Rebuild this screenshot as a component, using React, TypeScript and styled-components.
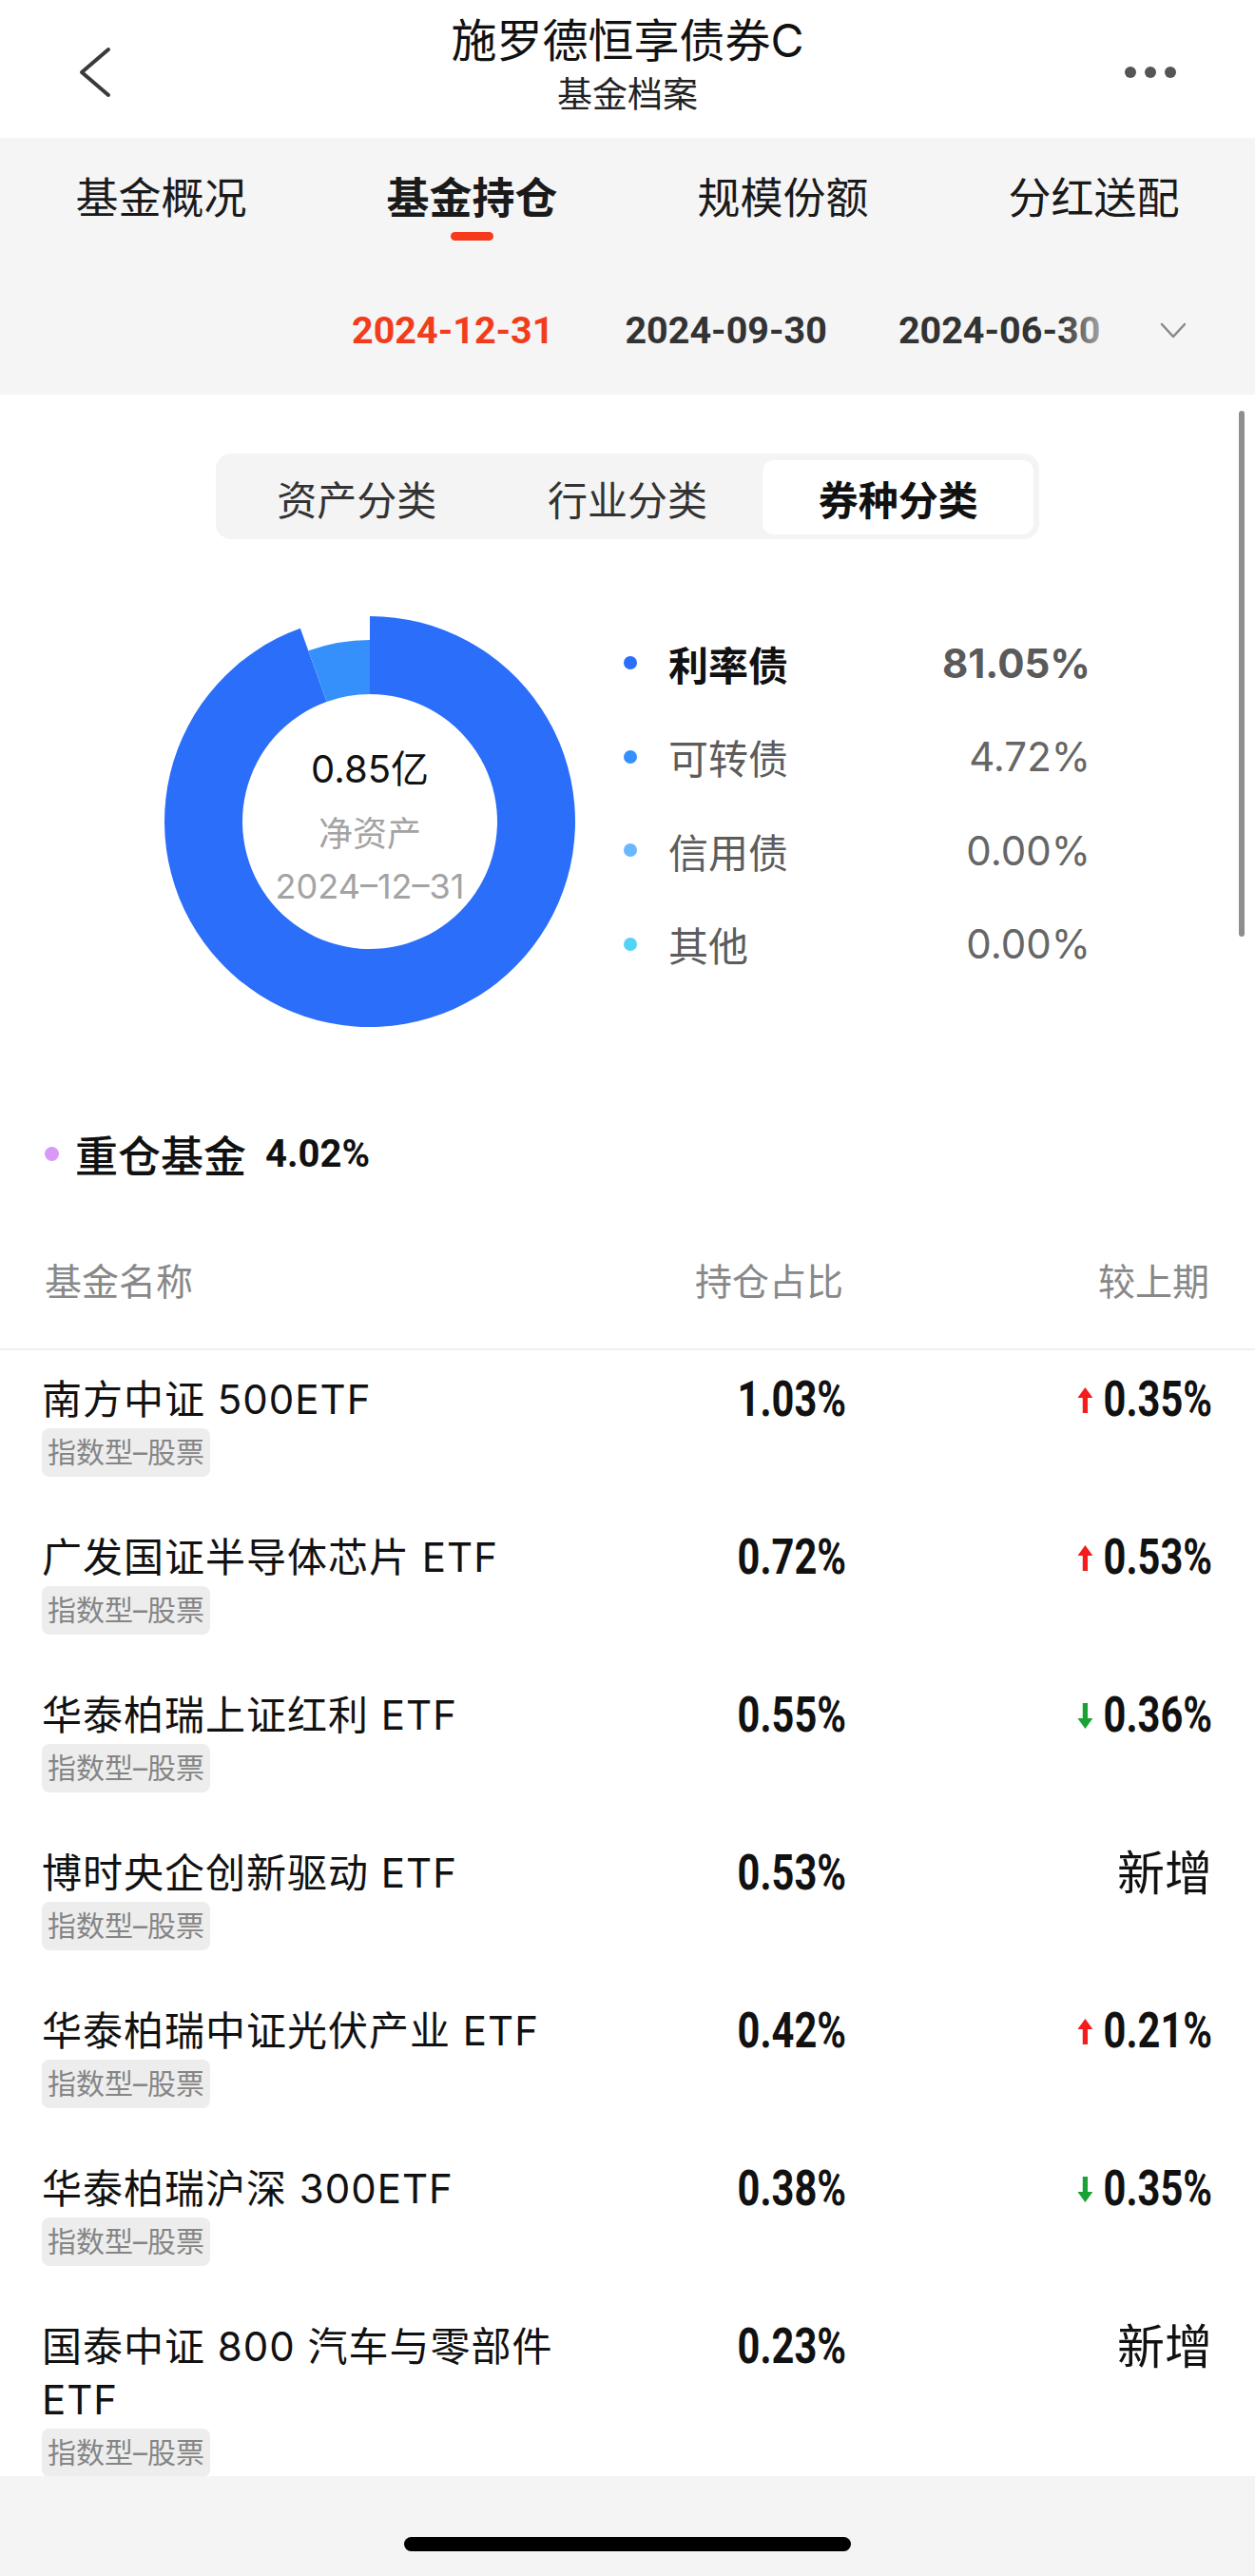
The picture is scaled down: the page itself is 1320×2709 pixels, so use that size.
import React from "react";
import styled, { createGlobalStyle } from "styled-components";

const GlobalStyle = createGlobalStyle`
  html, body { margin: 0; padding: 0; background: #fff; }
  body {
    font-family: Inter, "Noto Sans CJK SC", sans-serif;
    color: #111;
  }
  * { box-sizing: border-box; }
`;

const NUM = `Roboto, "Liberation Sans", sans-serif`;

const Screen = styled.div`
  width: 1320px;
  height: 2709px;
  display: flex;
  flex-direction: column;
  overflow: hidden;
  background: #f5f5f5;
`;

/* ---------- nav bar ---------- */
const NavBar = styled.header`
  flex-shrink: 0;
  height: 145px;
  background: #fff;
  display: grid;
  grid-template-columns: 220px 1fr 220px;
  align-items: start;
`;
const BackButton = styled.div`
  margin: 48px 0 0 80px;
  width: 40px;
  height: 56px;
`;
const TitleBlock = styled.div`
  display: flex;
  flex-direction: column;
  align-items: center;
  padding-top: 13px;
`;
const Title = styled.div`
  font-size: 48px;
  line-height: 60px;
  color: #111;
`;
const SubTitle = styled.div`
  margin-top: 2px;
  font-size: 37px;
  line-height: 50px;
  color: #222;
`;
const MoreButton = styled.div`
  justify-self: end;
  margin: 70px 83px 0 0;
  display: flex;
  gap: 9px;
`;
const Dot = styled.span`
  width: 12px;
  height: 12px;
  border-radius: 50%;
  background: #555;
`;

/* ---------- tabs ---------- */
const TabBar = styled.nav`
  flex-shrink: 0;
  height: 125px;
  display: grid;
  grid-template-columns: repeat(4, 1fr);
  padding: 0 6px;
`;
const Tab = styled.div<{ $active?: boolean }>`
  display: flex;
  flex-direction: column;
  align-items: center;
  padding-top: 34px;
  font-size: 45px;
  line-height: 60px;
  font-weight: ${(p) => (p.$active ? 700 : 400)};
  color: #1a1a1a;
`;
const TabIndicator = styled.span`
  margin-top: 5px;
  width: 45px;
  height: 9px;
  border-radius: 5px;
  background: #f53b1c;
`;

/* ---------- date strip ---------- */
const DateBar = styled.div`
  flex-shrink: 0;
  position: relative;
  height: 145px;
  padding: 10px 0 0 370px;
  display: flex;
  align-items: center;
  gap: 75px;
  overflow: hidden;
  white-space: nowrap;
  &::after {
    content: "";
    position: absolute;
    top: 0;
    bottom: 0;
    right: 0;
    width: 205px;
    background: linear-gradient(to right, rgba(245, 245, 245, 0) 0%, #f5f5f5 36%);
  }
`;
const DateItem = styled.span<{ $active?: boolean }>`
  font-family: ${NUM};
  font-weight: 700;
  font-size: 39.5px;
  color: ${(p) => (p.$active ? "#f23d1c" : "#333")};
`;
const DateToggle = styled.svg`
  position: absolute;
  left: 1220px;
  top: 339px;
  z-index: 1;
`;

/* ---------- main card ---------- */
const Main = styled.main`
  flex: 1;
  position: relative;
  overflow: hidden;
  background: #fff;
`;
const ScrollThumb = styled.div`
  position: absolute;
  right: 11px;
  top: 17px;
  width: 6px;
  height: 553px;
  border-radius: 3px;
  background: #8e8e8e;
`;

const Segmented = styled.div`
  margin: 62px auto 0;
  width: 866px;
  height: 90px;
  padding: 7px 6px 5px;
  background: #f4f4f4;
  border-radius: 16px;
  display: grid;
  grid-template-columns: repeat(3, 1fr);
`;
const Segment = styled.div<{ $active?: boolean }>`
  display: flex;
  align-items: center;
  justify-content: center;
  border-radius: 12px;
  font-size: 42px;
  background: ${(p) => (p.$active ? "#fff" : "transparent")};
  font-weight: ${(p) => (p.$active ? 700 : 400)};
  color: ${(p) => (p.$active ? "#111" : "#333")};
`;

const ChartRow = styled.section`
  margin-top: 81px;
  display: flex;
  align-items: flex-start;
  padding-left: 173px;
  gap: 51px;
`;
const DonutBox = styled.div`
  position: relative;
  width: 432px;
  height: 432px;
  flex-shrink: 0;
`;
const DonutCenter = styled.div`
  position: absolute;
  inset: 0;
  display: flex;
  flex-direction: column;
  align-items: center;
  justify-content: center;
  padding-top: 10px;
`;
const CenterValue = styled.div`
  font-size: 40px;
  line-height: 62px;
  color: #111;
`;
const CenterLabel = styled.div<{ $shift?: number }>`
  margin-top: ${(p) => p.$shift ?? 0}px;
  font-size: 36px;
  line-height: 58px;
  color: #a3a3a3;
`;
const Legend = styled.ul`
  list-style: none;
  margin: 0;
  padding: 0;
  width: 491px;
`;
const LegendRow = styled.li`
  height: 98.5px;
  display: flex;
  align-items: center;
`;
const LegendDot = styled.span<{ $color: string }>`
  width: 14px;
  height: 14px;
  border-radius: 50%;
  background: ${(p) => p.$color};
  margin-right: 33px;
`;
const LegendName = styled.span<{ $active?: boolean }>`
  font-size: 42px;
  font-weight: ${(p) => (p.$active ? 700 : 400)};
  color: ${(p) => (p.$active ? "#111" : "#5c5c5c")};
`;
const LegendValue = styled.span<{ $active?: boolean }>`
  margin-left: auto;
  font-size: 42px;
  font-weight: ${(p) => (p.$active ? 700 : 400)};
  color: ${(p) => (p.$active ? "#5a5a5a" : "#666")};
`;

const HeavyTitle = styled.div`
  margin-top: 102px;
  padding-left: 47px;
  display: flex;
  align-items: center;
  height: 62px;
`;
const HeavyDot = styled.span`
  width: 15px;
  height: 15px;
  border-radius: 50%;
  background: #d89af6;
  margin-right: 17px;
`;
const HeavyText = styled.span`
  font-size: 45px;
  font-weight: 500;
  color: #111;
  margin-right: 20px;
`;
const HeavyValue = styled.span`
  font-family: ${NUM};
  font-weight: 700;
  font-size: 40px;
  color: #111;
`;

const TableHead = styled.div`
  margin-top: 76px;
  display: grid;
  grid-template-columns: 1fr 257px 385px;
  padding: 0 48px 42px 47px;
  border-bottom: 2px solid #efefef;
  font-size: 39px;
  line-height: 56px;
  color: #888;
`;
const HeadCell = styled.div<{ $right?: boolean }>`
  text-align: ${(p) => (p.$right ? "right" : "left")};
`;

const Row = styled.div`
  display: grid;
  grid-template-columns: 1fr 260px 385px;
  align-items: start;
  padding: 24px 45px 33px 44px;
`;
const NameCell = styled.div`
  display: flex;
  flex-direction: column;
  align-items: flex-start;
  padding-right: 10px;
`;
const FundName = styled.div`
  font-size: 42px;
  line-height: 56px;
  letter-spacing: 1px;
  color: #111;
`;
const Tag = styled.span`
  margin-top: 2px;
  height: 51px;
  padding: 0 6px;
  border-radius: 8px;
  background: #ededed;
  font-size: 30px;
  line-height: 51px;
  color: #858585;
`;
const NumCell = styled.div`
  height: 56px;
  text-align: right;
  white-space: nowrap;
`;
/* DIN-like condensed figures: Roboto squeezed horizontally */
const Figure = styled.span`
  display: inline-flex;
  align-items: center;
  font-family: ${NUM};
  font-weight: 700;
  font-size: 52px;
  line-height: 56px;
  color: #111;
  transform: scaleX(0.8);
  transform-origin: right center;
`;
const ArrowIcon = styled.svg`
  margin-right: 14px;
  flex-shrink: 0;
`;
const NewMark = styled.span`
  font-size: 50px;
  line-height: 56px;
  color: #111;
`;

const BottomBar = styled.footer`
  flex-shrink: 0;
  height: 105px;
  background: #f4f4f4;
  padding-top: 64px;
`;
const HomeIndicator = styled.div`
  margin: 0 auto;
  width: 470px;
  height: 15px;
  border-radius: 8px;
  background: #000;
`;

/* ---------- helpers ---------- */
function arcPath(cx: number, cy: number, ro: number, ri: number, a0: number, a1: number) {
  const p = (r: number, a: number) => {
    const rad = ((a - 90) * Math.PI) / 180;
    return [cx + r * Math.cos(rad), cy + r * Math.sin(rad)];
  };
  const large = a1 - a0 > 180 ? 1 : 0;
  const [x0, y0] = p(ro, a0);
  const [x1, y1] = p(ro, a1);
  const [x2, y2] = p(ri, a1);
  const [x3, y3] = p(ri, a0);
  return `M${x0} ${y0} A${ro} ${ro} 0 ${large} 1 ${x1} ${y1} L${x2} ${y2} A${ri} ${ri} 0 ${large} 0 ${x3} ${y3} Z`;
}

const Arrow: React.FC<{ up: boolean }> = ({ up }) => (
  <ArrowIcon width="20" height="27" viewBox="0 0 20 27">
    {up ? (
      <polygon points="10,0 20,11 13.3,11 13.3,27 6.7,27 6.7,11 0,11" fill="#f51c1c" />
    ) : (
      <polygon points="10,27 20,16 13.3,16 13.3,0 6.7,0 6.7,16 0,16" fill="#1aa334" />
    )}
  </ArrowIcon>
);

const legend = [
  { name: "利率债", value: "81.05%", color: "#2a6ef9", active: true },
  { name: "可转债", value: "4.72%", color: "#3690fc" },
  { name: "信用债", value: "0.00%", color: "#6cb6ff" },
  { name: "其他", value: "0.00%", color: "#55d3f7" },
];

type Fund = { name: string; ratio: string; change?: string; up?: boolean };
const funds: Fund[] = [
  { name: "南方中证 500ETF", ratio: "1.03%", change: "0.35%", up: true },
  { name: "广发国证半导体芯片 ETF", ratio: "0.72%", change: "0.53%", up: true },
  { name: "华泰柏瑞上证红利 ETF", ratio: "0.55%", change: "0.36%", up: false },
  { name: "博时央企创新驱动 ETF", ratio: "0.53%" },
  { name: "华泰柏瑞中证光伏产业 ETF", ratio: "0.42%", change: "0.21%", up: true },
  { name: "华泰柏瑞沪深 300ETF", ratio: "0.38%", change: "0.35%", up: false },
  { name: "国泰中证 800 汽车与零部件 ETF", ratio: "0.23%" },
];

export default function App() {
  const split = 340.2;
  return (
    <>
      <GlobalStyle />
      <Screen>
        <NavBar>
          <BackButton>
            <svg width="40" height="56" viewBox="0 0 40 56">
              <polyline points="34,4 6,28 34,52" fill="none" stroke="#3a3a3a" strokeWidth="4" strokeLinecap="round" strokeLinejoin="round" />
            </svg>
          </BackButton>
          <TitleBlock>
            <Title>施罗德恒享债券C</Title>
            <SubTitle>基金档案</SubTitle>
          </TitleBlock>
          <MoreButton>
            <Dot />
            <Dot />
            <Dot />
          </MoreButton>
        </NavBar>

        <TabBar>
          <Tab>基金概况</Tab>
          <Tab $active>
            基金持仓
            <TabIndicator />
          </Tab>
          <Tab>规模份额</Tab>
          <Tab>分红送配</Tab>
        </TabBar>

        <DateBar>
          <DateItem $active>2024-12-31</DateItem>
          <DateItem>2024-09-30</DateItem>
          <DateItem>2024-06-30</DateItem>
        </DateBar>
        <DateToggle width="28" height="18" viewBox="0 0 28 18">
          <polyline points="2,2 14,15 26,2" fill="none" stroke="#888" strokeWidth="2.5" strokeLinecap="round" strokeLinejoin="round" />
        </DateToggle>

        <Main>
          <ScrollThumb />
          <Segmented>
            <Segment>资产分类</Segment>
            <Segment>行业分类</Segment>
            <Segment $active>券种分类</Segment>
          </Segmented>

          <ChartRow>
            <DonutBox>
              <svg width="432" height="432" viewBox="0 0 432 432">
                <path d={arcPath(216, 216, 216, 134, 0, split)} fill="#2a6ef9" />
                <path d={arcPath(216, 216, 191, 134, split, 360)} fill="#3690fc" />
              </svg>
              <DonutCenter>
                <CenterValue>0.85亿</CenterValue>
                <CenterLabel $shift={8}>净资产</CenterLabel>
                <CenterLabel $shift={-3}>2024–12–31</CenterLabel>
              </DonutCenter>
            </DonutBox>
            <Legend>
              {legend.map((l) => (
                <LegendRow key={l.name}>
                  <LegendDot $color={l.color} />
                  <LegendName $active={l.active}>{l.name}</LegendName>
                  <LegendValue $active={l.active}>{l.value}</LegendValue>
                </LegendRow>
              ))}
            </Legend>
          </ChartRow>

          <HeavyTitle>
            <HeavyDot />
            <HeavyText>重仓基金</HeavyText>
            <HeavyValue>4.02%</HeavyValue>
          </HeavyTitle>

          <TableHead>
            <HeadCell>基金名称</HeadCell>
            <HeadCell $right>持仓占比</HeadCell>
            <HeadCell $right>较上期</HeadCell>
          </TableHead>

          {funds.map((f) => (
            <Row key={f.name}>
              <NameCell>
                <FundName>{f.name}</FundName>
                <Tag>指数型–股票</Tag>
              </NameCell>
              <NumCell>
                <Figure>{f.ratio}</Figure>
              </NumCell>
              <NumCell>
                {f.change ? (
                  <Figure>
                    <Arrow up={!!f.up} />
                    {f.change}
                  </Figure>
                ) : (
                  <NewMark>新增</NewMark>
                )}
              </NumCell>
            </Row>
          ))}
        </Main>

        <BottomBar>
          <HomeIndicator />
        </BottomBar>
      </Screen>
    </>
  );
}
